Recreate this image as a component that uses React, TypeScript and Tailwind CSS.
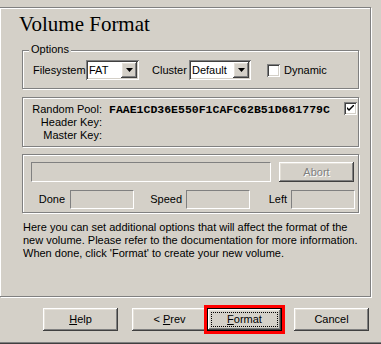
import React from 'react';

const raised =
  'bg-[#d4d0c8] shadow-[inset_-1px_-1px_0_#404040,inset_1px_1px_0_#ffffff,inset_-2px_-2px_0_#808080,inset_2px_2px_0_#e4e0d8]';
const sunken2 =
  'shadow-[inset_1px_1px_0_#808080,inset_-1px_-1px_0_#ffffff,inset_2px_2px_0_#404040,inset_-2px_-2px_0_#d4d0c8]';
const sunken1 = 'border border-t-[#808080] border-l-[#808080] border-b-white border-r-white';
const etched = 'border border-[#808080] shadow-[inset_1px_1px_0_#ffffff,1px_1px_0_#ffffff]';

function Arrow() {
  return (
    <svg width="7" height="4" viewBox="0 0 7 4">
      <polygon points="0,0 7,0 3.5,4" fill="#000" />
    </svg>
  );
}

function Select({ value, width }: { value: string; width: string }) {
  return (
    <div className={`flex items-center h-[20px] p-[2px] bg-white ${sunken2} ${width}`}>
      <span className="flex-1 pl-[1px] leading-none">{value}</span>
      <div className={`w-[16px] h-[16px] flex items-center justify-center ${raised}`}>
        <Arrow />
      </div>
    </div>
  );
}

function Check({ checked }: { checked?: boolean }) {
  return (
    <div className={`w-[13px] h-[13px] bg-white flex items-center justify-center ${sunken2}`}>
      {checked && (
        <svg width="7" height="7" viewBox="0 0 7 7">
          <path d="M0 2 L0 4 L2 6 L7 1 L7 -1 L2 4 Z" fill="#000" />
        </svg>
      )}
    </div>
  );
}

function Button({ children, className = '' }: { children: React.ReactNode; className?: string }) {
  return (
    <div className={`w-[75px] h-[23px] flex items-center justify-center ${raised} ${className}`}>
      {children}
    </div>
  );
}

export default function App() {
  return (
    <div
      className="relative w-[381px] h-[344px] bg-[#d4d0c8] overflow-hidden flex flex-col text-[11px] text-black"
      style={{ fontFamily: '"Liberation Sans", Arial, sans-serif' }}
    >
      {/* wizard page frame */}
      <div className={`mt-[7px] w-[371px] h-[290px] border-l-0 ${etched} flex flex-col`}>
        <div
          className="ml-[19px] mt-[6px] text-[21px] leading-none h-[20px]"
          style={{ fontFamily: '"Liberation Serif", "Times New Roman", serif' }}
        >
          Volume Format
        </div>

        {/* Options */}
        <div className={`relative ml-[22px] mt-[16px] w-[337px] h-[39px] pt-[9px] ${etched}`}>
          <span className="absolute left-[6px] top-[-8px] px-[2px] bg-[#d4d0c8] leading-[13px]">Options</span>
          <div className="flex items-center h-[20px]">
            <span className="w-[63px] pl-[10px] shrink-0">Filesystem</span>
            <Select value="FAT" width="w-[53px]" />
            <span className="w-[50px] pl-[13px] shrink-0">Cluster</span>
            <Select value="Default" width="w-[62px]" />
            <div className="ml-[16px]">
              <Check />
            </div>
            <span className="ml-[4px]">Dynamic</span>
          </div>
        </div>

        {/* Keys */}
        <div className={`ml-[22px] mt-[8px] w-[337px] h-[50px] pt-[5px] ${etched}`}>
          <div className="flex items-start leading-[13px]">
            <span className="w-[79px] text-right shrink-0">Random Pool:</span>
            <span
              className="ml-[7px] text-[11.5px] font-bold leading-[13px]"
              style={{ fontFamily: '"Liberation Mono", "Courier New", monospace' }}
            >
              FAAE1CD36E550F1CAFC62B51D681779C
            </span>
            <div className="ml-auto mr-[1px] mt-[-1px]">
              <Check checked />
            </div>
          </div>
          <div className="w-[79px] text-right leading-[13px]">Header Key:</div>
          <div className="w-[79px] text-right leading-[13px]">Master Key:</div>
        </div>

        {/* Progress */}
        <div className={`ml-[22px] mt-[7px] w-[337px] h-[59px] pt-[7px] pl-[8px] ${etched}`}>
          <div className="flex items-center">
            <div className={`w-[240px] h-[20px] ${sunken1}`} />
            <div className={`ml-[8px] w-[75px] h-[20px] flex items-center justify-center ${raised}`}>
              <span className="text-[#808080] [text-shadow:1px_1px_0_#ffffff]">Abort</span>
            </div>
          </div>
          <div className="flex items-center mt-[8px] ml-[-8px]">
            <span className="w-[47px] text-right pr-[5px]">Done</span>
            <div className={`w-[64px] h-[19px] ${sunken1}`} />
            <span className="w-[52px] text-right pr-[4px]">Speed</span>
            <div className={`w-[64px] h-[19px] ${sunken1}`} />
            <span className="w-[41px] text-right pr-[4px]">Left</span>
            <div className={`w-[64px] h-[19px] ${sunken1}`} />
          </div>
        </div>

        <div className="ml-[23px] mt-[8px] leading-[13px] whitespace-nowrap">
          <div>Here you can set additional options that will affect the format of the</div>
          <div>new volume. Please refer to the documentation for more information.</div>
          <div>When done, click 'Format' to create your new volume.</div>
        </div>
      </div>

      {/* buttons */}
      <div className="flex mt-[11px]">
        <Button className="ml-[43px]">
          <span><u>H</u>elp</span>
        </Button>
        <Button className="ml-[14px]">
          <span>&lt; <u>P</u>rev</span>
        </Button>
        <div className="ml-[0px] w-[75px] h-[23px] border border-black shadow-[0_0_0_3px_#ff0000]">
          <div className={`w-full h-full flex items-center justify-center p-[3px] ${raised}`}>
            <div className="w-full h-full flex items-center justify-center border border-dotted border-black">
              <span><u>F</u>ormat</span>
            </div>
          </div>
        </div>
        <Button className="ml-[12px]">
          <span>Cancel</span>
        </Button>
      </div>

      <div className="mt-auto h-[1px] bg-[#808080]" />
      <div className="h-[1px] bg-[#404040]" />
    </div>
  );
}
